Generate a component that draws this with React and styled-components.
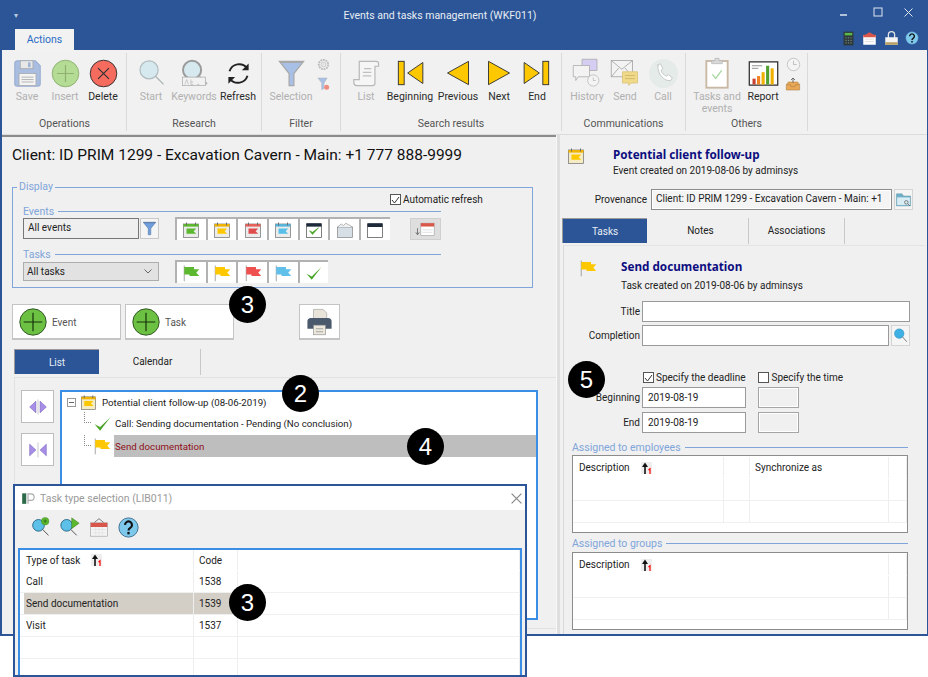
import React from "react";
import styled, { createGlobalStyle } from "styled-components";

const GlobalStyle = createGlobalStyle`
  html, body { margin: 0; padding: 0; background: #fff; }
  body { font-family: Roboto, "Noto Sans", sans-serif; font-size: 10px; color: #222; }
  * { box-sizing: border-box; }
`;

const Page = styled.div`
  position: relative;
  width: 928px;
  height: 677px;
  overflow: hidden;
  background: #fff;
`;

const Win = styled.div`
  width: 928px;
  height: 636px;
  background: #f0f0f0;
  border: solid #2b5597;
  border-width: 1px 1px 2px 2px;
  display: flex;
  flex-direction: column;
`;

const TitleBar = styled.div`
  background: #2b5597;
  height: 49px;
  color: #fff;
  display: grid;
  grid-template-rows: 28px 21px;
`;

const TitleTop = styled.div`
  display: flex;
  align-items: center;
`;

const Quick = styled.div`
  width: 34px;
  padding-left: 12px;
  color: #b8c7df;
  font-size: 8px;
`;

const TitleText = styled.div`
  flex: 1;
  text-align: center;
  font-size: 10.5px;
  color: #e8edf5;
  padding-left: 8px;
`;

const WinControls = styled.div`
  display: flex;
  align-items: center;
  gap: 20px;
  padding-right: 14px;
  margin-top: -6px;
`;

const TabsTop = styled.div`
  display: flex;
  align-items: flex-end;
  justify-content: space-between;
  padding: 0 8px 0 13px;
`;

const ActionsTab = styled.div`
  width: 59px;
  height: 21px;
  background: #f2f2f2;
  color: #2b6cc4;
  font-size: 10.5px;
  text-align: center;
  line-height: 21px;
`;

const TopIcons = styled.div`
  display: flex;
  gap: 6.5px;
  padding-bottom: 4px;
`;

const Ribbon = styled.div`
  height: 85px;
  background: #f1f1f1;
  display: flex;
  padding-left: 1px;
  border-bottom: 1px solid #dcdcdc;
`;

const Group = styled.div`
  width: ${(p) => p.$w}px;
  margin: 3px 0;
  border-right: 1px solid #dadada;
  display: flex;
  flex-direction: column;
`;

const GroupItems = styled.div`
  height: 65px;
  display: flex;
  padding-left: ${(p) => p.$pad || 0}px;
`;

const GroupName = styled.div`
  height: 14px;
  text-align: center;
  color: #555;
  font-size: 10.5px;
  line-height: 14px;
`;

const Item = styled.div`
  width: ${(p) => p.$w}px;
  display: flex;
  flex-direction: column;
  align-items: center;
  padding-top: 4px;
  text-align: center;
  font-size: 10.5px;
  line-height: 12px;
  color: ${(p) => (p.$off ? "#b0b0b0" : "#2b2b2b")};
`;

const ItemIcon = styled.div`
  height: 32px;
  display: flex;
  align-items: center;
  justify-content: center;
  margin-bottom: 2px;
`;

const SmallStack = styled.div`
  width: ${(p) => p.$w}px;
  display: flex;
  flex-direction: column;
  align-items: center;
  gap: 4px;
  padding-top: 4px;
`;

const Body = styled.div`
  flex: 1;
  display: flex;
  min-height: 0;
`;

const LeftPane = styled.div`
  width: 554px;
  border-top: 2px solid #8b8b8b;
  display: flex;
  flex-direction: column;
`;

const Splitter = styled.div`
  width: 4px;
  background: #dedede;
  border-left: 1px solid #f8f8f8;
`;

const RightPane = styled.div`
  flex: 1;
  display: flex;
  flex-direction: column;
  padding-left: 2px;
`;

const ClientTitle = styled.div`
  height: 43px;
  padding: 8px 0 0 10px;
  font-size: 15.5px;
  line-height: 20px;
  color: #111;
  white-space: nowrap;
`;

const Fieldset = styled.fieldset`
  margin: 0 0 0 10px;
  padding: 0 0 0 10px;
  width: 521px;
  height: 108px;
  border: 1px solid #7fa5da;
  min-width: 0;
`;

const Legend = styled.legend`
  margin-left: -6px;
  padding: 0 2px;
  color: #7fa5da;
  font-size: 10.5px;
  line-height: 14px;
`;

const AutoRow = styled.div`
  height: 11px;
  display: flex;
  padding-left: 367px;
`;

const CheckLabel = styled.div`
  display: flex;
  align-items: center;
  gap: 2px;
  font-size: 10px;
  line-height: 12px;
  white-space: nowrap;
  margin-right: ${(p) => p.$mr || 0}px;
`;

const Check = styled.span`
  width: 11px;
  height: 11px;
  border: 1px solid #555;
  background: #fff;
  display: flex;
  align-items: center;
  justify-content: center;
  flex: none;
`;

const SectionTitle = styled.div`
  width: ${(p) => p.$w || 418}px;
  height: 12px;
  margin-top: ${(p) => p.$mt || 0}px;
  display: flex;
  align-items: center;
  gap: 4px;
  color: #7fa5da;
  font-size: 10.5px;
  white-space: nowrap;
  &::after {
    content: "";
    flex: 1;
    height: 1px;
    background: #7fa5da;
  }
`;

const FilterRow = styled.div`
  height: 23px;
  display: flex;
  align-items: center;
`;

const ComboBox = styled.div`
  width: 116px;
  height: 21px;
  background: #efefef;
  border: 1px solid #777;
  padding-left: 4px;
  line-height: 18px;
  font-size: 10px;
  color: #222;
`;

const FilterBtn = styled.div`
  width: 19px;
  height: 21px;
  margin-left: 1px;
  background: #f5f5f5;
  border: 1px solid #c8c8c8;
  display: flex;
  align-items: center;
  justify-content: center;
`;

const SelectBox = styled.div`
  width: 136px;
  height: 19px;
  background: #e2e2e2;
  border: 1px solid #adadad;
  padding: 0 6px 0 3px;
  display: flex;
  align-items: center;
  justify-content: space-between;
  font-size: 10px;
`;

const Toggles = styled.div`
  margin-left: 16px;
  display: flex;
`;

const Toggle = styled.div`
  width: 30.7px;
  height: 23px;
  background: #fff;
  border-top: 2px solid #b2b2b2;
  border-left: 2px solid #b2b2b2;
  display: flex;
  align-items: center;
  justify-content: center;
`;

const SortBtn = styled.div`
  width: 31px;
  height: 22px;
  margin-left: 20px;
  background: #dedede;
  border: 1px solid #cfcfcf;
  display: flex;
  align-items: center;
  justify-content: center;
`;

const ActionRow = styled.div`
  margin-top: 16px;
  padding-left: 10px;
  display: flex;
  gap: 4px;
`;

const AddBtn = styled.div`
  width: ${(p) => p.$w}px;
  height: 36px;
  background: #fff;
  border: 1px solid #c4c4c4;
  border-bottom-width: 2px;
  padding: 1px 0 0 6px;
  display: flex;
  align-items: center;
  gap: 5px;
  font-size: 10px;
  color: #555;
`;

const PrintBtn = styled.div`
  width: 41px;
  height: 36px;
  margin-left: 61px;
  background: #fff;
  border: 1px solid #c4c4c4;
  border-bottom-width: 2px;
  display: flex;
  align-items: center;
  justify-content: center;
`;

const TabRow = styled.div`
  height: 25px;
  margin-top: ${(p) => p.$mt || 0}px;
  padding-left: ${(p) => p.$pl || 0}px;
  display: flex;
`;

const Tab = styled.div`
  width: ${(p) => p.$w}px;
  margin-right: ${(p) => p.$mr || 0}px;
  height: ${(p) => (p.$active ? 25 : 26)}px;
  background: ${(p) => (p.$active ? "#2b5597" : "transparent")};
  color: ${(p) => (p.$active ? "#e8edf5" : "#222")};
  border-right: ${(p) => (p.$active ? "none" : "1px solid #c8c8c8")};
  border-top: ${(p) => (p.$active ? "1px solid #9a9a9a" : "none")};
  border-left: ${(p) => (p.$active ? "1px solid #9a9a9a" : "none")};
  text-align: center;
  line-height: 25px;
  font-size: 10px;
`;

const ListPanel = styled.div`
  flex: 1;
  margin: 3px 0 5px 12px;
  border: solid #e2e2e2;
  border-width: 1px 0 1px 1px;
  padding: 12px 0 0 6px;
  display: flex;
  gap: 6px;
`;

const SideCol = styled.div`
  width: 33px;
  display: flex;
  flex-direction: column;
  gap: 10px;
`;

const SideBtn = styled.div`
  height: 33px;
  background: #fff;
  border: 1px solid #bdbdbd;
  display: flex;
  align-items: center;
  justify-content: center;
`;

const Tree = styled.div`
  width: 478px;
  height: 230px;
  background: #fff;
  border: 2px solid #3a8ee6;
`;

const TreeRow = styled.div`
  height: ${(p) => p.$h}px;
  display: flex;
  align-items: center;
  padding-left: ${(p) => p.$pl}px;
  font-size: 9.7px;
  color: #222;
`;

const Expander = styled.span`
  width: 9px;
  height: 9px;
  border: 1px solid #999;
  margin-right: 4px;
  display: flex;
  align-items: center;
  justify-content: center;
  &::before {
    content: "";
    width: 5px;
    height: 1px;
    background: #666;
  }
`;

const Connector = styled.span`
  width: 7px;
  height: ${(p) => p.$h}px;
  align-self: flex-start;
  border-left: 1px dotted #888;
  border-bottom: 1px dotted #888;
  margin-right: 2px;
`;

const TreeText = styled.span`
  margin-left: ${(p) => p.$ml}px;
  white-space: nowrap;
`;

const SelectedText = styled.div`
  flex: 1;
  align-self: stretch;
  margin-left: 3px;
  padding-left: 1px;
  background: #bebebe;
  color: #8f1018;
  display: flex;
  align-items: center;
`;

const EventHead = styled.div`
  height: 54px;
  padding: 12px 0 0 5px;
  display: flex;
`;

const EventText = styled.div`
  margin-left: 28px;
`;

const NavyTitle = styled.div`
  font-family: "Noto Sans", sans-serif;
  color: #0d0d80;
  font-weight: 700;
  font-size: 11.7px;
  line-height: 14px;
  margin-bottom: ${(p) => p.$mb || 3}px;
  white-space: nowrap;
`;

const Caption = styled.div`
  font-size: 10px;
  line-height: 13px;
`;

const ProvRow = styled.div`
  height: 21px;
  display: flex;
  align-items: center;
`;

const FieldLabel = styled.div`
  width: ${(p) => p.$w}px;
  text-align: right;
  padding-right: ${(p) => p.$pr ?? 2}px;
  font-size: 10px;
  white-space: nowrap;
`;

const ProvField = styled.div`
  width: 241px;
  height: 21px;
  margin-left: 4px;
  background: #f4f4f4;
  border: 1px solid #8c8c8c;
  box-shadow: inset 0 0 0 1px #fff;
  padding-left: 4px;
  line-height: 18px;
  font-size: 10px;
  white-space: nowrap;
  overflow: hidden;
`;

const IconBtn = styled.div`
  width: ${(p) => p.$w || 19}px;
  height: 21px;
  margin-left: 2px;
  background: #f5f5f5;
  border: 1px solid #d4d4d4;
  display: flex;
  align-items: center;
  justify-content: center;
`;

const TaskPanel = styled.div`
  flex: 1;
  margin: 2px 2px 0 1px;
  border-top: 1px solid #e4e4e4;
  border-left: 1px solid #dadada;
  display: flex;
  flex-direction: column;
`;

const TaskHead = styled.div`
  height: 55px;
  padding: 13px 0 0 15px;
  display: flex;
`;

const TaskText = styled.div`
  margin-left: 24px;
`;

const FormRow = styled.div`
  height: ${(p) => p.$h || 21}px;
  margin-top: ${(p) => p.$mt || 0}px;
  display: flex;
  align-items: center;
`;

const Input = styled.div`
  width: ${(p) => p.$w}px;
  height: 21px;
  margin-left: ${(p) => p.$ml || 0}px;
  background: #fff;
  border: 1px solid #9a9a9a;
  padding-left: 5px;
  line-height: 19px;
  font-size: 10px;
`;

const TimeBox = styled.div`
  width: 41px;
  height: 21px;
  margin-left: 12px;
  background: #f0f0f0;
  border: 1px solid #a5a5a5;
  box-shadow: inset 0 0 0 1px #fff;
`;

const ChecksRow = styled.div`
  margin: 26px 0 0 79px;
  height: 11px;
  display: flex;
`;

const Assigned = styled.div`
  margin: ${(p) => p.$mt}px 0 0 8px;
  width: 336px;
`;

const TableBox = styled.div`
  height: 78px;
  margin-top: ${(p) => p.$mt || 2}px;
  background: #fff;
  border: 1px solid #8c8c8c;
  padding-top: 1px;
  overflow: hidden;
`;

const TableRow = styled.div`
  height: ${(p) => p.$h || 22}px;
  display: grid;
  grid-template-columns: ${(p) => p.$cols};
  padding-left: ${(p) => p.$pl || 0}px;
  border-bottom: 1px solid ${(p) => (p.$head ? "transparent" : "#f0f0f0")};
`;

const Cell = styled.div`
  display: flex;
  align-items: center;
  padding-left: ${(p) => p.$pl ?? 6}px;
  gap: 11px;
  font-size: 10px;
  border-right: 1px solid #eeeeee;
  background: ${(p) => (p.$sel ? "#d3cec6" : "transparent")};
  white-space: nowrap;
`;

const Dialog = styled.div`
  position: absolute;
  left: 13px;
  top: 484px;
  width: 514px;
  height: 193px;
  background: #f0f0f0;
  border: 2px solid #2b5597;
  display: flex;
  flex-direction: column;
`;

const DialogTitle = styled.div`
  height: 24px;
  background: #fff;
  padding: 0 3px 0 6px;
  display: flex;
  align-items: center;
  color: #9a9a9a;
  font-size: 10.5px;
  gap: 5px;
`;

const DialogClose = styled.span`
  margin-left: auto;
  display: flex;
`;

const DialogTools = styled.div`
  height: 38px;
  padding: 0 0 4px 16px;
  display: flex;
  align-items: center;
  gap: 9px;
`;

const DialogGrid = styled.div`
  flex: 1;
  margin: 0 3px 0 3px;
  background: #fff;
  border: 2px solid #3a8ee6;
  border-bottom: none;
  overflow: hidden;
`;

const Callout = styled.div`
  position: absolute;
  left: ${(p) => p.$x - 18}px;
  top: ${(p) => p.$y - 18}px;
  width: 37px;
  height: 37px;
  border-radius: 50%;
  background: #000;
  color: #fff;
  font-family: "Liberation Sans", Arial, sans-serif;
  font-size: 24px;
  line-height: 37px;
  text-align: center;
`;

/* ---- drawings ---- */

const Svg = ({ s = 24, w, h, vb = "0 0 24 24", children }) => (
  <svg width={w || s} height={h || s} viewBox={vb} fill="none">
    {children}
  </svg>
);

const Floppy = () => (
  <Svg s={29}>
    <path d="M1.500 3.500a2 2 0 0 1 2-2h15l4 4v15a2 2 0 0 1-2 2h-17a2 2 0 0 1-2-2z" fill="#a9bde0" stroke="#9cb0d4" />
    <rect x="6" y="1.500" width="10.500" height="6.500" fill="#e8e8e8" stroke="#a5a5a5" strokeWidth=".6" />
    <rect x="12.500" y="2.800" width="2" height="4" fill="#9cb0d4" />
    <rect x="5" y="12" width="14" height="10" fill="#f4f4f4" stroke="#a5a5a5" strokeWidth=".6" />
    <path d="M7 15h10M7 17h10M7 19h10" stroke="#aaa" strokeWidth=".7" />
  </Svg>
);

const RoundIcon = ({ fill, stroke, type, s = 29 }) => (
  <Svg s={s}>
    <circle cx="12" cy="12" r="11" fill={fill} stroke={stroke} strokeWidth=".8" />
    {type === "plus" ? (
      <path d="M12 5v14M5 12h14" stroke={stroke} strokeWidth="1" />
    ) : (
      <path d="M7.500 7.500l9 9M16.500 7.500l-9 9" stroke={stroke} strokeWidth="1" />
    )}
  </Svg>
);

const Magnifier = ({ s = 29, keyword }) => (
  <Svg s={s}>
    <circle cx="10" cy="9" r="7.500" fill="#d5e9ee" stroke={keyword ? "#9a9a9a" : "#b0bcc0"} strokeWidth={keyword ? 1.6 : 1} />
    <path d="M15.500 14.500L22 21" stroke="#aab2b4" strokeWidth={keyword ? 2.4 : 1} />
    {keyword && <rect x="2" y="15" width="19" height="7" fill="#f2f2f2" stroke="#b4b4b4" strokeWidth=".7" />}
    {keyword && (
      <path d="M4 21l1.500-4 1.500 4M9 17v4h2M9 19h2M14 21h2" stroke="#b8b8b8" strokeWidth=".6" />
    )}
  </Svg>
);

const RefreshIcon = () => (
  <Svg s={27}>
    <path d="M4 10A9 9 0 0 1 19.500 7" stroke="#222" strokeWidth="1.700" />
    <path d="M21 3v6h-6z" fill="#222" />
    <path d="M20 14A9 9 0 0 1 4.500 17" stroke="#222" strokeWidth="1.700" />
    <path d="M3 21v-6h6z" fill="#222" />
  </Svg>
);

const Funnel = ({ s = 29, fill = "#a9c0e6", stroke = "#a8a8a8" }) => (
  <Svg s={s}>
    <path d="M2 2h20l-8 10v10h-4V12z" fill={fill} stroke={stroke} strokeWidth="1" />
    <path d="M2 2h20l-1 1.400H3z" fill={stroke} />
  </Svg>
);

const Gear = () => (
  <Svg s={15}>
    <circle cx="12" cy="12" r="7.500" stroke="#bdbdbd" strokeWidth="3" strokeDasharray="3 1.200" />
    <circle cx="12" cy="12" r="4" fill="#e6e6e6" stroke="#bdbdbd" />
  </Svg>
);

const SmallFunnelX = () => (
  <Svg s={15}>
    <path d="M3 3h15l-5 8v9l-4 2V11z" fill="#a9c0e6" stroke="#b4b4b4" strokeWidth=".7" />
    <circle cx="17" cy="18" r="4" fill="#ef8c80" />
  </Svg>
);

const ListScroll = () => (
  <Svg s={29}>
    <path d="M6 2h14a2 2 0 0 1 2 2v2h-3v14a2 2 0 0 1-2 2H4a2.500 2.500 0 0 1-2.500-2.500V17H6z" fill="#f6f6f6" stroke="#b8b8b8" />
    <path d="M10 8h6M9 11h7M9 14h7" stroke="#c0c0c0" />
  </Svg>
);

const yellow = "#fdc800";

const NavBegin = () => (
  <Svg s={28}>
    <rect x="2" y="2" width="5" height="20" fill={yellow} stroke="#333" strokeWidth=".8" />
    <path d="M10 12L23 3v18z" fill={yellow} stroke="#333" strokeWidth=".8" />
  </Svg>
);

const NavEnd = () => (
  <Svg s={28}>
    <rect x="17" y="2" width="5" height="20" fill={yellow} stroke="#333" strokeWidth=".8" />
    <path d="M14 12L1 3v18z" fill={yellow} stroke="#333" strokeWidth=".8" />
  </Svg>
);

const NavPrev = () => (
  <Svg s={28}>
    <path d="M3 12L21 2v20z" fill={yellow} stroke="#333" strokeWidth=".8" />
  </Svg>
);

const NavNext = () => (
  <Svg s={28}>
    <path d="M21 12L3 2v20z" fill={yellow} stroke="#333" strokeWidth=".8" />
  </Svg>
);

const History = () => (
  <Svg s={30}>
    <path d="M8 1h12v9H12l-1 2v-2H8z" fill="#d5cdf2" stroke="#a8a8a8" strokeWidth=".6" />
    <path d="M1 6h13v9H5l-2 3v-3H1z" fill="#f3f3f3" stroke="#a8a8a8" strokeWidth=".6" />
    <circle cx="17" cy="18" r="4.500" fill="#f4f4f4" stroke="#b4b4b4" strokeWidth=".6" />
    <path d="M17 15.500V18h2" stroke="#b4b4b4" strokeWidth=".6" />
  </Svg>
);

const SendMsg = () => (
  <Svg s={30}>
    <rect x="1" y="2" width="17" height="13" fill="#f3f3f3" stroke="#a8a8a8" strokeWidth=".7" />
    <path d="M1 2l8.500 7L18 2M1 15l6-7M18 15l-6-7" stroke="#a8a8a8" strokeWidth=".7" />
    <path d="M10 11h12v9h-5l-2 2v-2h-5z" fill="#f1d98a" stroke="#d8c070" strokeWidth=".6" />
    <path d="M12 14h8M12 16.500h8" stroke="#c8b060" strokeWidth=".6" />
  </Svg>
);

const CallIcon = () => (
  <Svg s={29}>
    <circle cx="12" cy="12" r="12" fill="#e4ebe9" />
    <path d="M7 5l2.500-1 2 4-1.600 1.400c.6 2 2.400 4 4.400 4.800l1.700-1.300 3.300 2.600-1.300 2.300c-5.500 1.200-11.500-6-10.500-12.800z" fill="#fff" stroke="#bcc2c0" strokeWidth=".7" />
  </Svg>
);

const Clipboard = () => (
  <Svg s={32}>
    <rect x="4" y="3" width="16" height="20" fill="#fff" stroke="#c8b8a4" strokeWidth="1.400" />
    <path d="M8 5V2.800h2.500V1h3v1.800H16V5z" fill="#d8d8d8" stroke="#b4b4b4" strokeWidth=".5" />
    <path d="M8.500 13l2.500 3 4.500-6" stroke="#a8d8a0" strokeWidth="1" />
  </Svg>
);

const ReportIcon = () => (
  <Svg s={31}>
    <rect x="1" y="3" width="22" height="18" fill="#fff" stroke="#333" strokeWidth="1" />
    <path d="M3 6h8M3 8h5" stroke="#888" strokeWidth=".7" />
    <rect x="3.500" y="16" width="2.400" height="4.500" fill="#c84030" />
    <rect x="7" y="14" width="2.400" height="6.500" fill="#f08020" />
    <rect x="10.500" y="11" width="2.400" height="9.500" fill="#f0b000" />
    <rect x="14" y="6" width="2.400" height="14.500" fill="#50a030" />
    <rect x="17.500" y="8" width="2.400" height="12.500" fill="#f0b000" />
  </Svg>
);

const ClockSmall = () => (
  <Svg s={15}>
    <circle cx="12" cy="12" r="10" fill="#f4f4f4" stroke="#c0c0c0" strokeWidth="1.400" />
    <path d="M12 6v6h5" stroke="#b0b0b0" strokeWidth="1.200" />
  </Svg>
);

const Inbox = () => (
  <Svg s={16}>
    <path d="M2 13l3-4h14l3 4v8H2z" fill="#e8a858" stroke="#a87838" strokeWidth=".8" />
    <path d="M2 13h6l1 3h6l1-3h6" stroke="#a87838" strokeWidth=".8" />
    <path d="M12 3v7M9 6l3-3 3 3" stroke="#555" strokeWidth="1.200" />
  </Svg>
);

const Calculator = () => (
  <Svg s={15}>
    <rect x="4" y="1" width="16" height="22" fill="#2e3a3a" />
    <rect x="6" y="3" width="12" height="4" fill="#5cb848" />
    <path d="M7 11h2M11 11h2M15 11h2M7 15h2M11 15h2M15 15h2M7 19h2M11 19h2M15 19h2" stroke="#8a9898" strokeWidth="1.400" />
  </Svg>
);

const TopCalendar = () => (
  <Svg s={15}>
    <path d="M2 8L12 2l10 6z" fill="#d9564a" />
    <rect x="2" y="7" width="20" height="15" fill="#fff" />
    <rect x="2" y="6" width="20" height="4" fill="#d9564a" />
    <path d="M5 13h14M5 17h14" stroke="#ccc" />
  </Svg>
);

const TopLock = () => (
  <Svg s={15}>
    <path d="M7 11V6a5 5 0 0 1 10 0v5" stroke="#e6e6e6" strokeWidth="2" />
    <rect x="2" y="10" width="20" height="12" fill="#f4f4f4" />
    <rect x="2" y="18" width="20" height="4" fill="#b8a060" />
  </Svg>
);

const HelpIcon = ({ s = 14, ring = "#2b5597" }) => (
  <svg width={s} height={s} viewBox="0 0 24 24">
    <circle cx="12" cy="12" r="11" fill="#7ec8ec" stroke={ring} strokeWidth=".8" />
    <path d="M8 9a4 4 0 1 1 6 3.500c-1.300.8-2 1.500-2 3" stroke="#111" strokeWidth="2.400" fill="none" />
    <rect x="10.700" y="17" width="2.600" height="2.800" fill="#111" />
  </svg>
);

const CalFlag = ({ head = "#5cb82e", flag = "#5cb82e", s = 18, body = "#ececec" }) => (
  <Svg s={s}>
    <rect x="2" y="4" width="20" height="18" fill={body} stroke="#777" strokeWidth="1" />
    <rect x="2" y="4" width="20" height="3.500" fill={head} />
    <path d="M6 2v4M18 2v4" stroke="#666" strokeWidth="1.200" />
    <path d="M6 10h13l-3.500 3.500L19 17H6z" fill={flag} />
  </Svg>
);

const CalCheck = () => (
  <Svg s={18}>
    <rect x="2" y="4" width="20" height="18" fill="#fff" stroke="#555" />
    <rect x="2" y="3" width="20" height="4.500" fill="#1c2a3a" />
    <path d="M6 13l4 5 8-9-8 6z" fill="#4aa528" stroke="#4aa528" strokeWidth=".8" />
  </Svg>
);

const CalEnvelope = () => (
  <Svg s={18}>
    <rect x="2" y="8" width="20" height="14" fill="#d6dee6" stroke="#8a8a8a" />
    <path d="M2 8l5-4 3 2 3-3 4 2 5 3" fill="#eef0f2" stroke="#8a8a8a" strokeWidth=".8" />
  </Svg>
);

const CalPlain = () => (
  <Svg s={18}>
    <rect x="2" y="4" width="20" height="18" fill="#fff" stroke="#555" />
    <rect x="2" y="3" width="20" height="5" fill="#1c2a3a" />
  </Svg>
);

const SortCal = () => (
  <Svg s={20}>
    <path d="M3 11v7M1 16l2 3 2-3" stroke="#666" strokeWidth="1" />
    <rect x="7" y="5" width="16" height="15" fill="#fff" stroke="#999" strokeWidth=".7" />
    <rect x="7" y="5" width="16" height="4" fill="#d9564a" />
    <path d="M9 13h12M9 16h12" stroke="#ddd" />
  </Svg>
);

const Flag = ({ fill = "#5cb82e", s = 18 }) => (
  <Svg s={s}>
    <path d="M3 2v21" stroke="#888" strokeWidth="1" />
    <path d="M3 4h13v3h7l-4 4.500 4 4.500H10v-2H3z" fill={fill} />
  </Svg>
);

const GreenCheck = ({ s = 19 }) => (
  <Svg s={s}>
    <path d="M2 13l7 8L22 4 9 16.500z" fill="#4aa528" />
  </Svg>
);

const Plus = () => (
  <Svg s={28}>
    <circle cx="12" cy="12" r="11.300" fill="#6cc143" stroke="#2c4f20" strokeWidth=".8" />
    <path d="M12 4v16M4 12h16" stroke="#14300c" strokeWidth="1" />
  </Svg>
);

const Printer = () => (
  <Svg s={29}>
    <path d="M7 2h8l3 3v5H7z" fill="#e8e4da" stroke="#999" strokeWidth=".5" />
    <path d="M5 9h14a3 3 0 0 1 3 3v6H2v-6a3 3 0 0 1 3-3z" fill="#4a5a6c" />
    <rect x="7" y="15" width="10" height="8" fill="#ece8dc" stroke="#888" strokeWidth=".5" />
    <path d="M9 18h6M9 20.500h6" stroke="#999" strokeWidth=".7" />
  </Svg>
);

const ExpandH = () => (
  <Svg s={20}>
    <path d="M9.500 5v14L2 12zM14.500 5v14L22 12z" fill="#a88ee6" stroke="#6a58b4" strokeWidth=".6" />
    <path d="M12 3v18" stroke="#b0b0b0" strokeWidth=".8" />
  </Svg>
);

const CollapseH = () => (
  <Svg s={20}>
    <path d="M2 5v14l7.500-7zM22 5v14l-7.500-7z" fill="#a88ee6" stroke="#6a58b4" strokeWidth=".6" />
    <path d="M12 3v18" stroke="#b0b0b0" strokeWidth=".8" />
  </Svg>
);

const FolderSearch = () => (
  <Svg s={17}>
    <path d="M2 4h8l2 3h10v14H2z" fill="#6eb0c8" stroke="#5a8ea0" strokeWidth=".6" />
    <rect x="3" y="9" width="18" height="11" fill="#d8ecf4" />
    <circle cx="16" cy="16" r="2.500" stroke="#555" />
    <path d="M18 18l3 3" stroke="#555" />
  </Svg>
);

const BlueSearch = () => (
  <Svg s={15}>
    <circle cx="10" cy="9" r="7.500" fill="#3fb0e4" stroke="#2a90c0" />
    <path d="M15 14l7 8" stroke="#777" strokeWidth="1.500" />
  </Svg>
);

const SortMark = () => (
  <Svg w={11} h={12} vb="0 0 11 12">
    <rect width="11" height="12" fill="#eeeeee" />
    <path d="M4 12V3" stroke="#111" strokeWidth="1.600" />
    <path d="M1 5L4 .5 7 5z" fill="#111" />
    <path d="M7.500 8l1.500-1.300V12" stroke="#f00" strokeWidth="1.200" />
  </Svg>
);

const DialogLogo = () => (
  <Svg s={14}>
    <rect x="2" y="4" width="7" height="18" fill="#2d6a4a" />
    <path d="M12 22V5h5a5 5 0 0 1 0 11h-5" stroke="#aaa" strokeWidth="2" />
  </Svg>
);

const DlgSearchPlus = () => (
  <Svg s={20}>
    <circle cx="9" cy="10" r="7" fill="#5cc0e8" stroke="#1a5a78" />
    <path d="M14 15l7 7" stroke="#555" strokeWidth="1.200" />
    <circle cx="17" cy="5" r="4.500" fill="#5cb82e" stroke="#3a8020" strokeWidth=".5" />
    <path d="M17 3v4M15 5h4" stroke="#1a4a10" strokeWidth=".7" />
  </Svg>
);

const DlgSearchFlag = () => (
  <Svg s={20}>
    <circle cx="8" cy="10" r="7" fill="#5cc0e8" stroke="#1a5a78" />
    <path d="M13 15l7 7" stroke="#555" strokeWidth="1.200" />
    <path d="M14 1v13l9-6.500z" fill="#5cb82e" stroke="#2e6a18" strokeWidth=".5" />
  </Svg>
);

const DlgCal = () => (
  <Svg s={20}>
    <path d="M6 7l6-5 6 5" stroke="#444" strokeWidth=".8" />
    <rect x="2" y="7" width="20" height="16" fill="#f4f4f4" stroke="#999" strokeWidth=".7" />
    <rect x="2" y="7" width="20" height="5" fill="#d9564a" />
    <path d="M4 15h16M4 19h16M8 12v10M12 12v10M16 12v10" stroke="#ddd" strokeWidth=".7" />
  </Svg>
);

const Chevron = () => (
  <svg width="8" height="5" viewBox="0 0 8 5" fill="none">
    <path d="M.5.5L4 4 7.500.5" stroke="#666" />
  </svg>
);

const Tick = () => (
  <svg width="9" height="8" viewBox="0 0 9 8" fill="none">
    <path d="M1 4l2.500 3L8 1" stroke="#333" />
  </svg>
);

const CloseX = ({ c = "#dfe6f0", s = 9 }) => (
  <svg width={s} height={s} viewBox="0 0 9 9" fill="none">
    <path d="M.5.5l8 8M8.500.5l-8 8" stroke={c} />
  </svg>
);

const EVENT_TOGGLES = [
  <CalFlag key="g" />,
  <CalFlag key="y" head="#f0b400" flag="#fdc800" />,
  <CalFlag key="r" head="#e8605a" flag="#e04c4c" />,
  <CalFlag key="b" head="#58b4d8" flag="#58c0e8" />,
  <CalCheck key="c" />,
  <CalEnvelope key="e" />,
  <CalPlain key="p" />,
];

const TASK_TOGGLES = [
  <Flag key="g" />,
  <Flag key="y" fill="#fdc800" />,
  <Flag key="r" fill="#ee5050" />,
  <Flag key="b" fill="#60c0ea" />,
  <GreenCheck key="c" s={18} />,
];

const EMP_COLS = "151px 26px 139px 1fr";
const GRP_COLS = "316px 1fr";
const DLG_COLS = "170px 44px 1fr";

export default function App() {
  return (
    <Page>
      <GlobalStyle />
      <Win>
        <TitleBar>
          <TitleTop>
            <Quick>▾</Quick>
            <TitleText>Events and tasks management (WKF011)</TitleText>
            <WinControls>
              <svg width="16" height="10" viewBox="0 0 16 10"><path d="M4 8h7" stroke="#dfe6f0" strokeWidth="1.500" /></svg>
              <svg width="12" height="10" viewBox="0 0 12 10" fill="none"><rect x="2" y="1" width="8" height="8" stroke="#dfe6f0" /></svg>
              <CloseX />
            </WinControls>
          </TitleTop>
          <TabsTop>
            <ActionsTab>Actions</ActionsTab>
            <TopIcons>
              <Calculator />
              <TopCalendar />
              <TopLock />
              <HelpIcon />
            </TopIcons>
          </TabsTop>
        </TitleBar>

        <Ribbon>
          <Group $w={124}>
            <GroupItems $pad={5}>
              <Item $w={38} $off><ItemIcon><Floppy /></ItemIcon>Save</Item>
              <Item $w={38} $off><ItemIcon><RoundIcon fill="#b4dc94" stroke="#8fb070" type="plus" /></ItemIcon>Insert</Item>
              <Item $w={38}><ItemIcon><RoundIcon fill="#f56b5e" stroke="#333" /></ItemIcon>Delete</Item>
            </GroupItems>
            <GroupName>Operations</GroupName>
          </Group>
          <Group $w={135}>
            <GroupItems $pad={5}>
              <Item $w={38} $off><ItemIcon><Magnifier /></ItemIcon>Start</Item>
              <Item $w={48} $off><ItemIcon><Magnifier keyword /></ItemIcon>Keywords</Item>
              <Item $w={40}><ItemIcon><RefreshIcon /></ItemIcon>Refresh</Item>
            </GroupItems>
            <GroupName>Research</GroupName>
          </Group>
          <Group $w={79}>
            <GroupItems $pad={4}>
              <Item $w={50} $off><ItemIcon><Funnel /></ItemIcon>Selection</Item>
              <SmallStack $w={15}><Gear /><SmallFunnelX /></SmallStack>
            </GroupItems>
            <GroupName>Filter</GroupName>
          </Group>
          <Group $w={221}>
            <GroupItems $pad={6}>
              <Item $w={38} $off><ItemIcon><ListScroll /></ItemIcon>List</Item>
              <Item $w={50}><ItemIcon><NavBegin /></ItemIcon>Beginning</Item>
              <Item $w={46}><ItemIcon><NavPrev /></ItemIcon>Previous</Item>
              <Item $w={36}><ItemIcon><NavNext /></ItemIcon>Next</Item>
              <Item $w={40}><ItemIcon><NavEnd /></ItemIcon>End</Item>
            </GroupItems>
            <GroupName>Search results</GroupName>
          </Group>
          <Group $w={124}>
            <GroupItems $pad={6}>
              <Item $w={38} $off><ItemIcon><History /></ItemIcon>History</Item>
              <Item $w={38} $off><ItemIcon><SendMsg /></ItemIcon>Send</Item>
              <Item $w={38} $off><ItemIcon><CallIcon /></ItemIcon>Call</Item>
            </GroupItems>
            <GroupName>Communications</GroupName>
          </Group>
          <Group $w={122}>
            <GroupItems $pad={5}>
              <Item $w={52} $off><ItemIcon><Clipboard /></ItemIcon>Tasks and<br />events</Item>
              <Item $w={40}><ItemIcon><ReportIcon /></ItemIcon>Report</Item>
              <SmallStack $w={20}><ClockSmall /><Inbox /></SmallStack>
            </GroupItems>
            <GroupName>Others</GroupName>
          </Group>
        </Ribbon>

        <Body>
          <LeftPane>
            <ClientTitle>Client: ID PRIM 1299 - Excavation Cavern - Main: +1 777 888-9999</ClientTitle>
            <Fieldset>
              <Legend>Display</Legend>
              <AutoRow>
                <CheckLabel><Check><Tick /></Check>Automatic refresh</CheckLabel>
              </AutoRow>
              <SectionTitle>Events</SectionTitle>
              <FilterRow>
                <ComboBox>All events</ComboBox>
                <FilterBtn><Funnel s={15} fill="#6f9fdc" stroke="#5c7aa8" /></FilterBtn>
                <Toggles>
                  {EVENT_TOGGLES.map((icon, i) => <Toggle key={i}>{icon}</Toggle>)}
                </Toggles>
                <SortBtn><SortCal /></SortBtn>
              </FilterRow>
              <SectionTitle $mt={8}>Tasks</SectionTitle>
              <FilterRow>
                <SelectBox>All tasks<Chevron /></SelectBox>
                <Toggles>
                  {TASK_TOGGLES.map((icon, i) => <Toggle key={i}>{icon}</Toggle>)}
                </Toggles>
              </FilterRow>
            </Fieldset>

            <ActionRow>
              <AddBtn $w={109}><Plus />Event</AddBtn>
              <AddBtn $w={109}><Plus />Task</AddBtn>
              <PrintBtn><Printer /></PrintBtn>
            </ActionRow>

            <TabRow $mt={9} $pl={12}>
              <Tab $w={85} $mr={6} $active>List</Tab>
              <Tab $w={96}>Calendar</Tab>
            </TabRow>

            <ListPanel>
              <SideCol>
                <SideBtn><ExpandH /></SideBtn>
                <SideBtn><CollapseH /></SideBtn>
              </SideCol>
              <Tree>
                <TreeRow $pl={5} $h={20}>
                  <Expander />
                  <CalFlag head="#f0b400" flag="#fdc800" s={17} body="#f6ecc4" />
                  <TreeText $ml={5}>Potential client follow-up (08-06-2019)</TreeText>
                </TreeRow>
                <TreeRow $pl={22} $h={23}>
                  <Connector $h={11} />
                  <GreenCheck />
                  <TreeText $ml={3}>Call: Sending documentation - Pending (No conclusion)</TreeText>
                </TreeRow>
                <TreeRow $pl={22} $h={22}>
                  <Connector $h={11} />
                  <Flag fill="#fdc800" />
                  <SelectedText>Send documentation</SelectedText>
                </TreeRow>
              </Tree>
            </ListPanel>
          </LeftPane>

          <Splitter />

          <RightPane>
            <EventHead>
              <CalFlag head="#f0b400" flag="#fdc800" body="#f6ecc4" />
              <EventText>
                <NavyTitle>Potential client follow-up</NavyTitle>
                <Caption>Event created on 2019-08-06 by adminsys</Caption>
              </EventText>
            </EventHead>
            <ProvRow>
              <FieldLabel $w={85} $pr={0}>Provenance</FieldLabel>
              <ProvField>Client: ID PRIM 1299 - Excavation Cavern - Main: +1</ProvField>
              <IconBtn><FolderSearch /></IconBtn>
            </ProvRow>
            <TabRow $mt={8}>
              <Tab $w={85} $mr={6} $active>Tasks</Tab>
              <Tab $w={96}>Notes</Tab>
              <Tab $w={96}>Associations</Tab>
            </TabRow>
            <TaskPanel>
              <TaskHead>
                <Flag fill="#fdc800" />
                <TaskText>
                  <NavyTitle $mb={6}>Send documentation</NavyTitle>
                  <Caption>Task created on 2019-08-06 by adminsys</Caption>
                </TaskText>
              </TaskHead>
              <FormRow>
                <FieldLabel $w={78}>Title</FieldLabel>
                <Input $w={268} />
              </FormRow>
              <FormRow $mt={3}>
                <FieldLabel $w={78}>Completion</FieldLabel>
                <Input $w={247} />
                <IconBtn><BlueSearch /></IconBtn>
              </FormRow>
              <ChecksRow>
                <CheckLabel $mr={13}><Check><Tick /></Check>Specify the deadline</CheckLabel>
                <CheckLabel><Check />Specify the time</CheckLabel>
              </ChecksRow>
              <FormRow $mt={4}>
                <FieldLabel $w={78}>Beginning</FieldLabel>
                <Input $w={104}>2019-08-19</Input>
                <TimeBox />
              </FormRow>
              <FormRow $mt={4}>
                <FieldLabel $w={78}>End</FieldLabel>
                <Input $w={104}>2019-08-19</Input>
                <TimeBox />
              </FormRow>
              <Assigned $mt={8}>
                <SectionTitle $w={336}>Assigned to employees</SectionTitle>
                <TableBox>
                  <TableRow $cols={EMP_COLS} $head>
                    <Cell>Description<SortMark /></Cell>
                    <Cell />
                    <Cell $pl={5}>Synchronize as</Cell>
                    <Cell />
                  </TableRow>
                  <TableRow $cols={EMP_COLS}><Cell /><Cell /><Cell /><Cell /></TableRow>
                  <TableRow $cols={EMP_COLS}><Cell /><Cell /><Cell /><Cell /></TableRow>
                </TableBox>
              </Assigned>
              <Assigned $mt={4}>
                <SectionTitle $w={336}>Assigned to groups</SectionTitle>
                <TableBox $mt={3}>
                  <TableRow $cols={GRP_COLS} $head>
                    <Cell>Description<SortMark /></Cell>
                    <Cell />
                  </TableRow>
                  <TableRow $cols={GRP_COLS}><Cell /><Cell /></TableRow>
                  <TableRow $cols={GRP_COLS}><Cell /><Cell /></TableRow>
                </TableBox>
              </Assigned>
            </TaskPanel>
          </RightPane>
        </Body>
      </Win>

      <Dialog>
        <DialogTitle>
          <DialogLogo />
          Task type selection (LIB011)
          <DialogClose><CloseX c="#888" s={11} /></DialogClose>
        </DialogTitle>
        <DialogTools>
          <DlgSearchPlus />
          <DlgSearchFlag />
          <DlgCal />
          <HelpIcon s={21} ring="#1a4a70" />
        </DialogTools>
        <DialogGrid>
          <TableRow $cols={DLG_COLS} $head $pl={4} $h={21}>
            <Cell $pl={2}>Type of task<SortMark /></Cell>
            <Cell $pl={5}>Code</Cell>
            <Cell />
          </TableRow>
          <TableRow $cols={DLG_COLS} $pl={4} $h={21.9}><Cell $pl={2}>Call</Cell><Cell $pl={5}>1538</Cell><Cell /></TableRow>
          <TableRow $cols={DLG_COLS} $pl={4} $h={21.9}><Cell $sel $pl={2}>Send documentation</Cell><Cell $sel $pl={5}>1539</Cell><Cell /></TableRow>
          <TableRow $cols={DLG_COLS} $pl={4} $h={21.9}><Cell $pl={2}>Visit</Cell><Cell $pl={5}>1537</Cell><Cell /></TableRow>
          <TableRow $cols={DLG_COLS} $pl={4} $h={21.9}><Cell /><Cell /><Cell /></TableRow>
          <TableRow $cols={DLG_COLS} $pl={4} $h={21.9}><Cell /><Cell /><Cell /></TableRow>
        </DialogGrid>
      </Dialog>

      <Callout $x={247} $y={304}>3</Callout>
      <Callout $x={300} $y={393}>2</Callout>
      <Callout $x={425} $y={446}>4</Callout>
      <Callout $x={247} $y={602}>3</Callout>
      <Callout $x={586} $y={379}>5</Callout>
    </Page>
  );
}
